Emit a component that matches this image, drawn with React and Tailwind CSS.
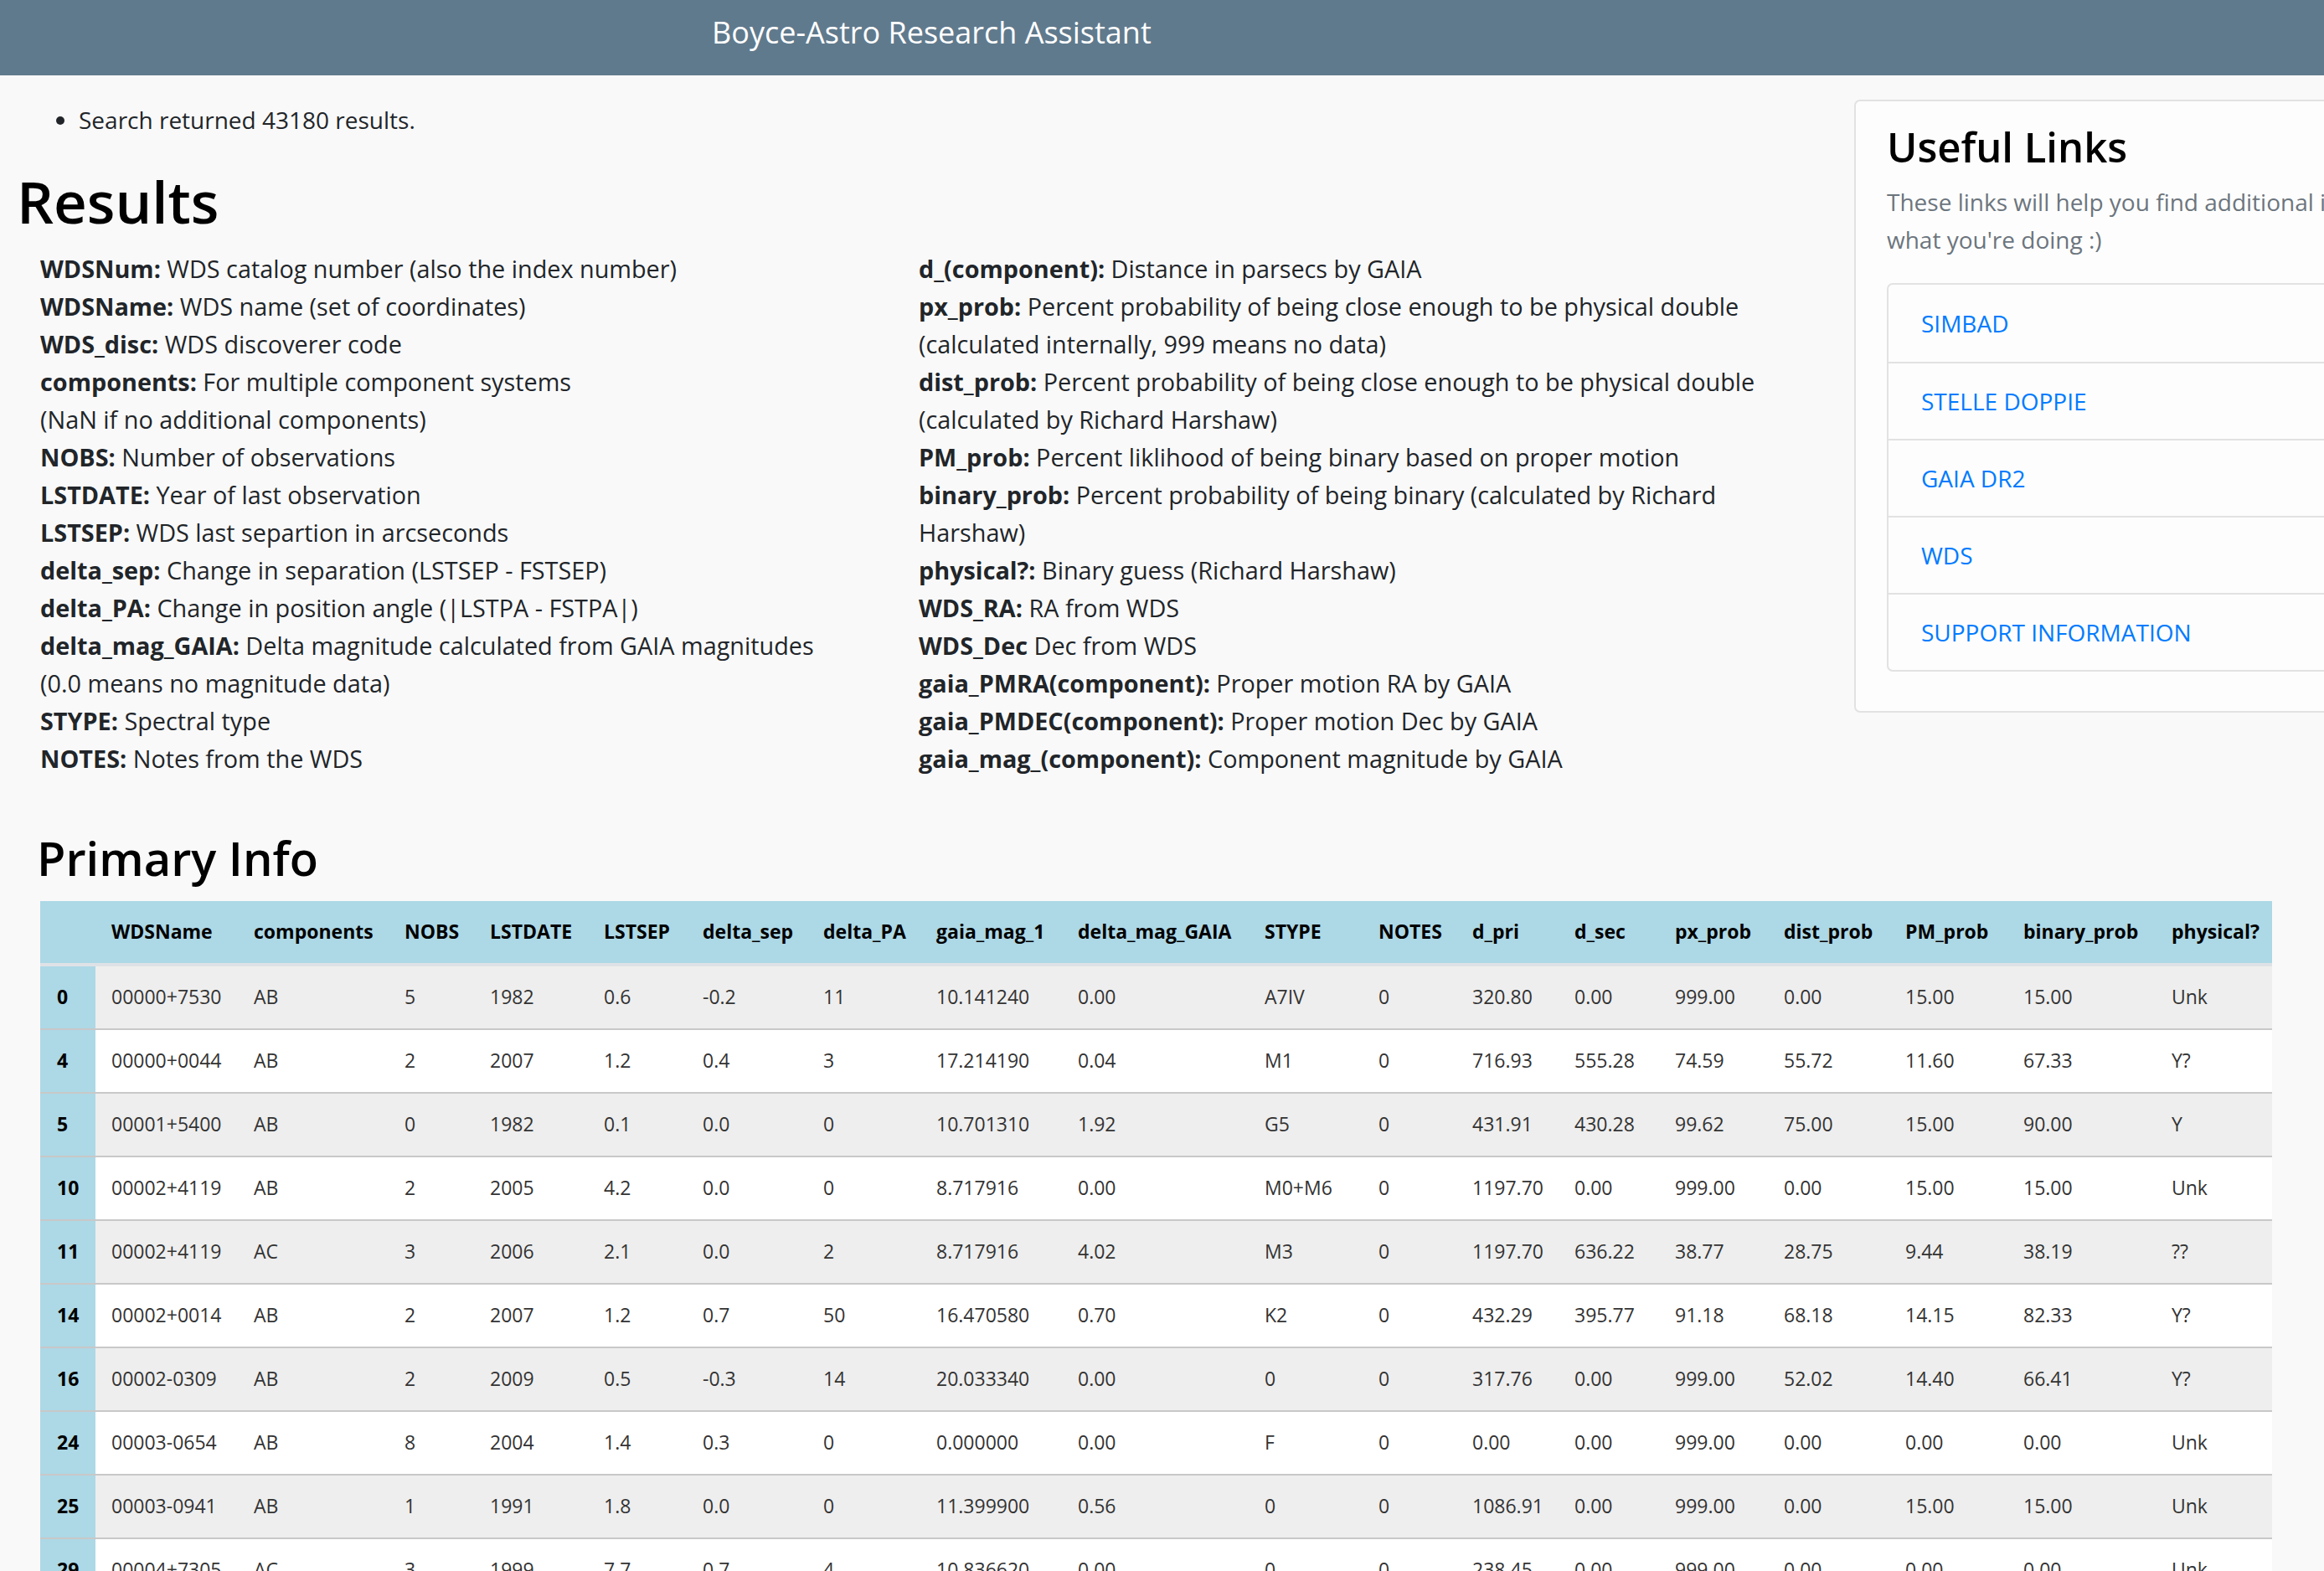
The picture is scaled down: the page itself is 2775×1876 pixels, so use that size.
import React from 'react';

const LEFT_NOTES = [
  ['WDSNum:', ' WDS catalog number (also the index number)'],
  ['WDSName:', ' WDS name (set of coordinates)'],
  ['WDS_disc:', ' WDS discoverer code'],
  ['components:', ' For multiple component systems'],
  [null, '(NaN if no additional components)'],
  ['NOBS:', ' Number of observations'],
  ['LSTDATE:', ' Year of last observation'],
  ['LSTSEP:', ' WDS last separtion in arcseconds'],
  ['delta_sep:', ' Change in separation (LSTSEP - FSTSEP)'],
  ['delta_PA:', ' Change in position angle (|LSTPA - FSTPA|)'],
  ['delta_mag_GAIA:', ' Delta magnitude calculated from GAIA magnitudes'],
  [null, '(0.0 means no magnitude data)'],
  ['STYPE:', ' Spectral type'],
  ['NOTES:', ' Notes from the WDS'],
];

const RIGHT_NOTES = [
  ['d_(component):', ' Distance in parsecs by GAIA'],
  ['px_prob:', ' Percent probability of being close enough to be physical double'],
  [null, '(calculated internally, 999 means no data)'],
  ['dist_prob:', ' Percent probability of being close enough to be physical double'],
  [null, '(calculated by Richard Harshaw)'],
  ['PM_prob:', ' Percent liklihood of being binary based on proper motion'],
  ['binary_prob:', ' Percent probability of being binary (calculated by Richard'],
  [null, 'Harshaw)'],
  ['physical?:', ' Binary guess (Richard Harshaw)'],
  ['WDS_RA:', ' RA from WDS'],
  ['WDS_Dec', ' Dec from WDS'],
  ['gaia_PMRA(component):', ' Proper motion RA by GAIA'],
  ['gaia_PMDEC(component):', ' Proper motion Dec by GAIA'],
  ['gaia_mag_(component):', ' Component magnitude by GAIA'],
];

const COLUMNS = [
  'WDSName', 'components', 'NOBS', 'LSTDATE', 'LSTSEP', 'delta_sep', 'delta_PA',
  'gaia_mag_1', 'delta_mag_GAIA', 'STYPE', 'NOTES', 'd_pri', 'd_sec', 'px_prob',
  'dist_prob', 'PM_prob', 'binary_prob', 'physical?',
];

const ROWS = [
  ['0', '00000+7530', 'AB', '5', '1982', '0.6', '-0.2', '11', '10.141240', '0.00', 'A7IV', '0', '320.80', '0.00', '999.00', '0.00', '15.00', '15.00', 'Unk'],
  ['4', '00000+0044', 'AB', '2', '2007', '1.2', '0.4', '3', '17.214190', '0.04', 'M1', '0', '716.93', '555.28', '74.59', '55.72', '11.60', '67.33', 'Y?'],
  ['5', '00001+5400', 'AB', '0', '1982', '0.1', '0.0', '0', '10.701310', '1.92', 'G5', '0', '431.91', '430.28', '99.62', '75.00', '15.00', '90.00', 'Y'],
  ['10', '00002+4119', 'AB', '2', '2005', '4.2', '0.0', '0', '8.717916', '0.00', 'M0+M6', '0', '1197.70', '0.00', '999.00', '0.00', '15.00', '15.00', 'Unk'],
  ['11', '00002+4119', 'AC', '3', '2006', '2.1', '0.0', '2', '8.717916', '4.02', 'M3', '0', '1197.70', '636.22', '38.77', '28.75', '9.44', '38.19', '??'],
  ['14', '00002+0014', 'AB', '2', '2007', '1.2', '0.7', '50', '16.470580', '0.70', 'K2', '0', '432.29', '395.77', '91.18', '68.18', '14.15', '82.33', 'Y?'],
  ['16', '00002-0309', 'AB', '2', '2009', '0.5', '-0.3', '14', '20.033340', '0.00', '0', '0', '317.76', '0.00', '999.00', '52.02', '14.40', '66.41', 'Y?'],
  ['24', '00003-0654', 'AB', '8', '2004', '1.4', '0.3', '0', '0.000000', '0.00', 'F', '0', '0.00', '0.00', '999.00', '0.00', '0.00', '0.00', 'Unk'],
  ['25', '00003-0941', 'AB', '1', '1991', '1.8', '0.0', '0', '11.399900', '0.56', '0', '0', '1086.91', '0.00', '999.00', '0.00', '15.00', '15.00', 'Unk'],
  ['29', '00004+7305', 'AC', '3', '1999', '7.7', '0.7', '4', '10.836620', '0.00', '0', '0', '238.45', '0.00', '999.00', '0.00', '0.00', '0.00', 'Unk'],
];

const LINKS = ['SIMBAD', 'STELLE DOPPIE', 'GAIA DR2', 'WDS', 'SUPPORT INFORMATION'];

const GRID =
  'grid grid-cols-[66px_170px_180px_102px_136px_118px_144px_135px_169px_223px_136px_112px_122px_120px_130px_145px_141px_177px_139px]';

function NoteColumn({ lines }) {
  return (
    <div className="flex flex-col">
      {lines.map(([key, text], i) => (
        <div key={i} className="h-[45.06px] leading-[45px] whitespace-nowrap">
          {key && <span className="font-bold">{key}</span>}
          {text}
        </div>
      ))}
    </div>
  );
}

function UsefulLinks() {
  return (
    <div className="self-start w-[700px] shrink-0 mt-[29px] rounded-[7px] border-2 border-[#e2e2e2] bg-[#fdfdfd] px-[37px] pt-[25px] pb-[47px]">
      <h3 className="text-[49px] font-semibold leading-[1.2] text-black">Useful Links</h3>
      <p className="mt-[14px] text-[28px] leading-[45px] text-[#6c757d] whitespace-nowrap">
        These links will help you find additional information about
        <br />
        what you're doing :)
      </p>
      <div className="mt-[29px] rounded-[7px] border-2 border-[#e2e2e2] bg-[#fdfdfd]">
        {LINKS.map((l, i) => (
          <div
            key={l}
            className={`h-[92px] flex items-center pl-[39px] text-[28px] text-[#007bff] ${i > 0 ? 'border-t-2 border-[#e2e2e2]' : ''}`}
          >
            {l}
          </div>
        ))}
      </div>
    </div>
  );
}

function ResultsTable() {
  return (
    <div className="ml-[48px] w-[2665px] text-[23px]">
      <div className={`${GRID} h-[74px] items-center bg-[#add8e6] font-bold text-black border-b-[4px] border-[#dee2e6] box-content`}>
        <div />
        {COLUMNS.map(c => (
          <div key={c} className="pl-[19px] whitespace-nowrap">{c}</div>
        ))}
      </div>
      {ROWS.map((r, i) => (
        <div
          key={r[0]}
          className={`${GRID} h-[74px] box-content border-b-2 border-[#c8c8c8] ${i % 2 === 0 ? 'bg-[#eeeeee]' : 'bg-white'}`}
        >
          <div className="bg-[#add8e6] flex items-center pl-[20px] font-bold text-black">{r[0]}</div>
          {r.slice(1).map((v, j) => (
            <div key={j} className="flex items-center pl-[19px] text-[#333333] whitespace-nowrap">{v}</div>
          ))}
        </div>
      ))}
    </div>
  );
}

export default function App() {
  return (
    <div className="w-[2775px] h-[1876px] overflow-hidden bg-[#f9f9f9] text-[#212529] font-['Open_Sans',sans-serif]">
      <div className="h-[90px] bg-[#607a8d] flex items-center pl-[850px] pb-[12px]">
        <span className="text-[36px] text-white leading-none">Boyce-Astro Research Assistant</span>
      </div>

      <div className="flex">
        <div className="w-[2214px] shrink-0">
          <ul className="mt-[32px] pl-[94px] list-disc text-[28px] leading-[42px]">
            <li>Search returned 43180 results.</li>
          </ul>
          <h1 className="mt-[35px] pl-[20px] text-[69px] font-semibold leading-[1.2] text-black">Results</h1>
          <div className="mt-[16px] pl-[48px] grid grid-cols-[1049px_1fr] text-[28.8px]">
            <NoteColumn lines={LEFT_NOTES} />
            <NoteColumn lines={RIGHT_NOTES} />
          </div>
        </div>
        <UsefulLinks />
      </div>

      <h2 className="mt-[63px] pl-[44px] text-[56px] font-semibold leading-[1.2] text-black">Primary Info</h2>
      <div className="mt-[17px]">
        <ResultsTable />
      </div>
    </div>
  );
}
